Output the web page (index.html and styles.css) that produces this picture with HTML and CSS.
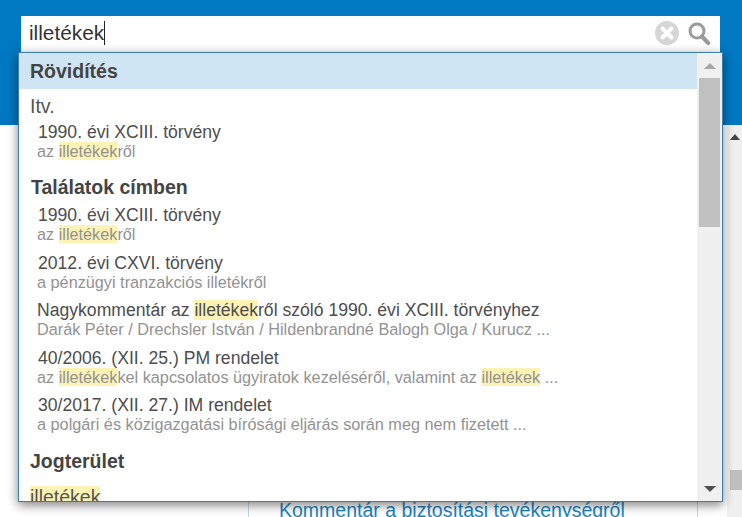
FILE: index.html
```html
<!DOCTYPE html>
<html lang="hu">
<head>
<meta charset="utf-8">
<title>Keresés</title>
<link rel="stylesheet" href="styles.css">
</head>
<body>
<header class="top">
  <div class="search">
    <span class="query">illetékek</span><span class="caret"></span>
    <svg class="clear" width="24" height="24" viewBox="0 0 24 24"><circle cx="12" cy="12" r="12" fill="#d6d6d6"/><path d="M7.5 7.5l9 9M16.5 7.5l-9 9" stroke="#fff" stroke-width="4" stroke-linecap="round"/></svg>
    <svg class="glass" width="23" height="24" viewBox="0 0 23 24"><circle cx="9" cy="9" r="7" fill="none" stroke="#9a9a9a" stroke-width="3"/><path d="M14 14.5l6.2 6.5" stroke="#9a9a9a" stroke-width="4" stroke-linecap="round"/></svg>
  </div>
</header>
<main class="page">
  <div class="side"></div>
  <div class="content"><a class="link">Kommentár a biztosítási tevékenységről</a></div>
  <div class="page-right"></div>
  <div class="page-scroll">
    <span class="page-up"></span>
    <span class="page-thumb"></span>
  </div>
</main>
<section class="dropdown">
  <div class="list">
    <h3 class="band">Rövidítés</h3>
    <div class="abbr">Itv.</div>
    <div class="item first"><div class="t">1990. évi XCIII. törvény</div><div class="s">az <mark>illetékek</mark>ről</div></div>
    <h3 class="head head-1">Találatok címben</h3>
    <div class="item i1"><div class="t">1990. évi XCIII. törvény</div><div class="s">az <mark>illetékek</mark>ről</div></div>
    <div class="item i2"><div class="t">2012. évi CXVI. törvény</div><div class="s">a pénzügyi tranzakciós illetékről</div></div>
    <div class="item i2"><div class="t tight">Nagykommentár az <mark>illetékek</mark>ről szóló 1990. évi XCIII. törvényhez</div><div class="s">Darák Péter / Drechsler István / Hildenbrandné Balogh Olga / Kurucz ...</div></div>
    <div class="item i2"><div class="t">40/2006. (XII. 25.) PM rendelet</div><div class="s">az <mark>illetékek</mark>kel kapcsolatos ügyiratok kezeléséről, valamint az <mark>illetékek</mark> ...</div></div>
    <div class="item i2"><div class="t">30/2017. (XII. 27.) IM rendelet</div><div class="s">a polgári és közigazgatási bírósági eljárás során meg nem fizetett ...</div></div>
    <h3 class="head head-2">Jogterület</h3>
    <div class="abbr area"><mark>illetékek</mark></div>
  </div>
  <div class="scroll">
    <span class="up"></span>
    <span class="thumb"></span>
    <span class="down"></span>
  </div>
</section>
</body>
</html>
```
FILE: styles.css
```css
* { box-sizing: border-box; }
html, body { margin: 0; height: 100%; overflow: hidden; }
body { position: relative; background: #fff; font-family: "Liberation Sans", Arial, sans-serif; color: #444; }
.top { height: 125px; background: #0078c2; padding: 16px 22px 0 21px; }
.search { height: 36px; background: #fff; display: flex; align-items: center; padding: 0 9px 0 8px; }
.query { font-size: 20.8px; color: #333; margin-top: -2px; }
.caret { width: 1px; height: 24px; background: #222; margin-top: -2px; margin-right: auto; }
.clear { margin-right: 9px; margin-top: -2px; }
.glass { margin-top: -1px; }
.page { height: 392px; display: flex; }
.side { width: 249px; border-right: 1px solid #c5d5df; }
.content { width: 449px; padding: 373px 0 0 30px; border-right: 1px solid #c5d5df; }
.link { font-size: 19.5px; color: #1a86c0; white-space: nowrap; line-height: 24px; }
.page-right { flex: 1; }
.page-scroll { width: 15px; background: #f0f0f0; position: relative; }
.page-up { position: absolute; left: 3px; top: 9px; border: 5px solid transparent; border-top: 0; border-bottom: 6px solid #444; }
.page-thumb { position: absolute; left: 3px; right: 0; top: 345px; height: 20px; background: #c0c0c0; }
.dropdown { position: absolute; left: 18px; top: 52px; width: 705px; height: 450px; display: flex; background: #fff; border: 1px solid #3a7fae; box-shadow: 0 3px 10px rgba(0,0,0,.5); overflow: hidden; }
.list { flex: 1; overflow: hidden; }
.band { margin: 0; height: 36px; line-height: 36px; padding-left: 11px; background: #d0e5f3; font-size: 19.5px; font-weight: 700; color: #444; }
.abbr { font-size: 19.5px; line-height: 24px; padding-left: 11px; margin-top: 5px; color: #555; }
.item { padding-left: 19px; }
.item.first { margin-top: 4px; }
.item.i1 { margin-top: 6px; }
.item.i2 { margin-top: 7.5px; }
.t { font-size: 17.6px; line-height: 20px; color: #4d4d4d; white-space: nowrap; }
.t.tight { margin-left: -1px; }
.s { font-size: 16.25px; line-height: 20px; color: #929292; white-space: nowrap; }
.item .s { margin-left: -1px; margin-top: -1px; padding-bottom: 1px; }
mark { background: #fdf3b5; color: inherit; }
.head { margin: 0; padding-left: 11px; font-size: 19.5px; line-height: 24px; font-weight: 700; color: #444; }
.head-1 { margin-top: 13px; padding-left: 12px; }
.head-2 { margin-top: 14px; }
.area { margin-top: 12px; }
.scroll { width: 25px; background: #f0f0f0; position: relative; }
.up { position: absolute; left: 7px; top: 10px; border: 6px solid transparent; border-top: 0; border-bottom: 6px solid #a6a6a6; }
.thumb { position: absolute; left: 2px; right: 2px; top: 25px; height: 149px; background: #c0c0c0; }
.down { position: absolute; left: 7px; bottom: 9px; border: 6px solid transparent; border-bottom: 0; border-top: 6px solid #505050; }
```
